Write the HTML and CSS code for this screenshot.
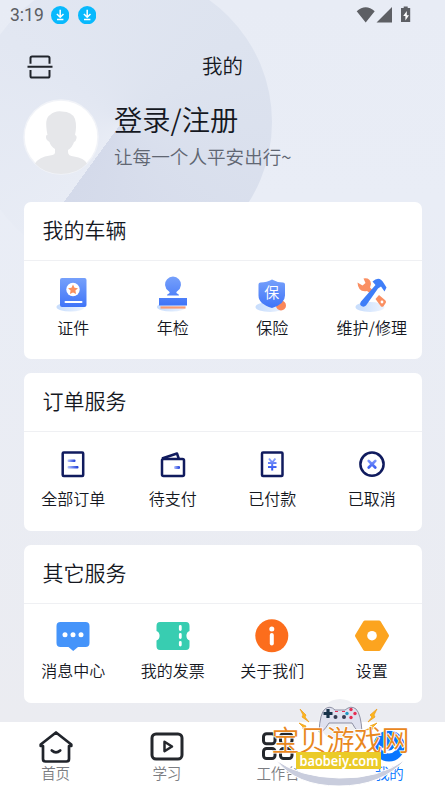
FILE: index.html
```html
<!DOCTYPE html>
<html lang="zh-CN">
<head>
<meta charset="utf-8">
<title>我的</title>
<link rel="stylesheet" href="styles.css">
</head>
<body>
<svg class="defs" width="0" height="0" aria-hidden="true">
  <defs>
    <linearGradient id="blue" x1="0" y1="0" x2="0" y2="1"><stop offset="0" stop-color="#76a0fb"/><stop offset="1" stop-color="#3f74f8"/></linearGradient>
    <linearGradient id="fade" x1="0" y1="0" x2="1" y2="0"><stop offset="0" stop-color="#b8c6ff"/><stop offset="1" stop-color="#1838d8"/></linearGradient>
    <linearGradient id="fadeDown" gradientUnits="userSpaceOnUse" x1="0" y1="11" x2="0" y2="24"><stop offset="0" stop-color="#93a9ff"/><stop offset="1" stop-color="#2148ed"/></linearGradient>
    <linearGradient id="pale" x1="0" y1="0" x2="1" y2="0"><stop offset="0" stop-color="#c6dcfc"/><stop offset="1" stop-color="#edf4ff"/></linearGradient>
    <g id="download"><circle cx="9.2" cy="9.2" r="9.2" fill="#08b9fd"/><path d="M9.2 3.8v7M5.9 8l3.3 3.3L12.5 8M6 13.6h6.4" fill="none" stroke="#fff" stroke-width="1.5"/></g>
  </defs>
</svg>
<div class="app">
  <header class="hero">
    <div class="status">
      <span class="clock">3:19</span>
      <svg class="dl" viewBox="0 0 18.4 18.4"><use href="#download"/></svg>
      <svg class="dl" viewBox="0 0 18.4 18.4"><use href="#download"/></svg>
      <svg class="signals" width="56" height="18" viewBox="0 0 56 18" fill="#5d5f64">
        <path d="M.7 5.2Q9.7-2.6 18.7 5.2L9.7 16.5zM36 1v15.5H20.5zM47.700.5h4v1.500h2.500v14H45v-14h2.700z"/>
        <path d="M50.800 5l-3.600 5h2.200v4.500l3.600-5.300h-2.200z" fill="#fff"/>
      </svg>
    </div>
    <div class="titlebar">
      <svg class="scan" width="26" height="24" viewBox="0 0 26 24" fill="none" stroke="#20242b" stroke-width="2">
        <path d="M3.500 8.700V3q0-1.600 1.600-1.600h15.800q1.600 0 1.600 1.600v5.700M3.500 15v6q0 1.600 1.600 1.600h15.800q1.600 0 1.600-1.600v-6M.500 11.800h25"/>
      </svg>
      <h1>我的</h1>
    </div>
    <div class="profile">
      <svg class="avatar" width="76" height="76" viewBox="0 0 76 76">
        <circle cx="38" cy="38" r="37" fill="#fff" stroke="#f1f3f8" stroke-width="1.5"/>
        <path d="M12 64.500Q16 58 27 56.500Q33 56 32 52V50Q27.500 47 26.500 43Q22.500 41 23 36.500L24.500 36Q21 19 27 16Q32 11.500 39 12.500Q49 12.500 52 20Q54 27 52 36Q55 37 52.500 42Q51.500 43 51 43Q49.500 48 45 51V53Q45 57 51 57.500Q61 59 64 64.500Q54 75 38 75Q22 75 12 64.500" fill="#e6e7ea"/>
      </svg>
      <div class="who"><div class="login">登录/注册</div><div class="motto">让每一个人平安出行~</div></div>
    </div>
  </header>

  <main>
    <section class="card">
      <h2>我的车辆</h2>
      <div class="grid">
        <div class="item"><svg viewBox="0 0 40 40">
          <ellipse cx="17.500" cy="33" rx="14" ry="4.500" fill="url(#pale)"/><rect x="7" y="4" width="26.500" height="29" rx="2" fill="url(#blue)"/><circle cx="20" cy="15.500" r="6.700" fill="#fff"/><path d="M20 10.500l1.500 3.300 3.500.4-2.600 2.400.7 3.500-3.100-1.700-3.100 1.700.7-3.500-2.600-2.400 3.500-.4z" fill="#fa905e"/><path d="M12.500 28h16" stroke="#fff" stroke-width="2" stroke-linecap="round"/></svg><span>证件</span></div>
        <div class="item"><svg viewBox="0 0 40 40">
          <ellipse cx="18.500" cy="33" rx="14.500" ry="4.500" fill="url(#pale)"/><path d="M14 21.500q0-1.500 2-2Q17.500 18.500 15.500 17A7.900 7.900 0 1 1 24.500 17q-2 1.500-.5 2.500q2 .5 2 2zM6 24h28v7.500H6z" fill="url(#blue)"/><path d="M7.500 33.500h25" stroke="#f89a73" stroke-width="2.200"/></svg><span>年检</span></div>
        <div class="item"><svg viewBox="0 0 40 40">
          <ellipse cx="18" cy="33" rx="14.500" ry="5" fill="url(#pale)"/><circle cx="29" cy="31.500" r="5" fill="#fa875a"/><path d="M20 5.500Q25 8.500 31 8.500q2 0 2 2v11Q33 30 20 34Q6.500 30 6.500 21.500v-11q0-2 2-2Q15 8.500 20 5.500" fill="url(#blue)"/><text x="19.800" y="24.300" class="shield">保</text></svg><span>保险</span></div>
        <div class="item"><svg viewBox="0 0 40 40">
          <ellipse cx="18" cy="33" rx="14.500" ry="5" fill="url(#pale)"/><path d="M5.500 8.500l5 3 3-2.500-2-4.500q7-1 7.500 5.500l-1 3.500 3.500 3.500-2.500 3-4-3q-9 1.500-9.500-8.500M23.500 25l3.500-4 6.500 5.500q1.200 1.500 0 2.700l-2 3q-1 1.100-2.500.3z" fill="#fa8f62"/><path d="M20.500 7.500q7-6.500 11.500 2l2.500 4-2 4-3.500-5-3 2L14 31.500q-2 2-4.500.5t-.5-4.500L23.500 11z" fill="#3f7ef8"/><circle cx="30" cy="28" r="1.400" fill="#fff"/></svg><span>维护/修理</span></div>
      </div>
    </section>

    <section class="card">
      <h2>订单服务</h2>
      <div class="grid outline">
        <div class="item"><svg viewBox="0 0 40 40" fill="none" stroke="#101b5e" stroke-width="2.500"><rect x="9.700" y="5.500" width="20.500" height="23.500" rx="1"/><rect x="14.500" y="12.500" width="8" height="2.500" rx="1" fill="url(#fade)" stroke="none"/><rect x="14.500" y="19" width="11" height="2.500" rx="1" fill="url(#fade)" stroke="none"/></svg><span>全部订单</span></div>
        <div class="item"><svg viewBox="0 0 40 40" fill="none" stroke="#101b5e" stroke-width="2.500" stroke-linejoin="round"><rect x="9" y="12" width="22" height="17" rx="1.500"/><path d="M9 11.500L24 6.500l1.700 5"/><rect x="21" y="19" width="6" height="3" rx="1.200" fill="url(#fade)" stroke="none"/></svg><span>待支付</span></div>
        <div class="item"><svg viewBox="0 0 40 40" fill="none" stroke="#101b5e" stroke-width="2.500"><rect x="10" y="5.500" width="20.500" height="23.500" rx="1"/><path d="M17 11.500l3.200 4 3.200-4M20.200 15.500v8M16 16h8.500M16 20h8.500" stroke="url(#fadeDown)" stroke-width="2"/></svg><span>已付款</span></div>
        <div class="item"><svg viewBox="0 0 40 40" fill="none" stroke="#101b5e" stroke-width="2.500"><circle cx="20" cy="17.200" r="11.600"/><path d="M16.700 13.900l6.600 6.600M23.300 13.900l-6.600 6.600" stroke="url(#fadeDown)" stroke-width="2.700" stroke-linecap="round"/></svg><span>已取消</span></div>
      </div>
    </section>

    <section class="card">
      <h2>其它服务</h2>
      <div class="grid">
        <div class="item"><svg viewBox="0 0 40 40"><path d="M7.500 5h25q4 0 4 4v17q0 4-4 4H25l-4.800 4-4.700-4h-8q-4 0-4-4V9q0-4 4-4" fill="#4594fa"/><g fill="#fff"><circle cx="12" cy="17.700" r="2.500"/><circle cx="20" cy="17.700" r="2.500"/><circle cx="28" cy="17.700" r="2.500"/></g></svg><span>消息中心</span></div>
        <div class="item"><svg viewBox="0 0 40 40"><path d="M7 5h26q3.500 0 3.500 4v5a5.200 5.200 0 0 0 0 9.500V29q0 4-3.500 4H7q-3.500 0-3.500-4v-5.500a5.200 5.200 0 0 0 0-9.500V9Q3.500 5 7 5" fill="#38cdb1"/><path d="M27.300 9.500v3M27.300 17.500v3M27.300 25.500v2.500" stroke="#fff" stroke-width="2.800" stroke-linecap="round"/></svg><span>我的发票</span></div>
        <div class="item"><svg viewBox="0 0 40 40"><circle cx="19.800" cy="18.800" r="16.500" fill="#fc6d1c"/><circle cx="19.800" cy="12" r="2.500" fill="#fff"/><path d="M19.800 18v8.500" stroke="#fff" stroke-width="4" stroke-linecap="round"/></svg><span>关于我们</span></div>
        <div class="item"><svg viewBox="0 0 40 40"><path d="M13 5.500h14L35 18.700 27 32H13L5 18.700z" fill="#fca41f" stroke="#fca41f" stroke-width="4" stroke-linejoin="round"/><circle cx="20" cy="18.700" r="4.800" fill="#fff"/></svg><span>设置</span></div>
      </div>
    </section>
  </main>

  <nav>
    <div class="tab"><svg viewBox="0 0 40 36" fill="none" stroke="#20242b" stroke-width="2.700" stroke-linejoin="round" stroke-linecap="round"><path d="M7 17H4.700V15.500L20 3.500 35.300 15.500V17H33M7 17v13q0 2.500 2.500 2.500h21q2.500 0 2.500-2.500V17M15.800 21.500q4.200 3.600 8.400 0"/></svg><span>首页</span></div>
    <div class="tab"><svg viewBox="0 0 40 36" fill="none" stroke="#24272c" stroke-width="3" stroke-linejoin="round"><rect x="5" y="5" width="30" height="25" rx="4"/><path d="M17.500 12.800l7.500 4.700-7.500 4.700z" stroke-width="2.500"/></svg><span>学习</span></div>
    <div class="tab"><svg viewBox="0 0 40 36" fill="none" stroke="#24272c" stroke-width="3"><rect x="5.500" y="4.700" width="11.500" height="10" rx="3"/><rect x="22.500" y="4.700" width="11.500" height="10" rx="3"/><rect x="5.500" y="19.500" width="11.500" height="10" rx="3"/><rect x="22.500" y="19.500" width="11.500" height="10" rx="3"/></svg><span>工作台</span></div>
    <div class="tab on"><svg viewBox="0 0 40 36"><circle cx="20" cy="17" r="15.500" fill="#0876ff"/><path d="M14 20q6 6 12 0" fill="none" stroke="#fff" stroke-width="3" stroke-linecap="round"/></svg><span>我的</span></div>
  </nav>

  <svg class="badge" width="150" height="96" viewBox="0 0 150 96">
    <circle cx="74" cy="25" r="21" fill="#eeeff3"/>
    <path d="M10 65Q33 82 73 83T140 64Q116 91 73 91T10 65" fill="#c9cddd" stroke="#fff" stroke-width="1"/>
    <path d="M53 37Q54 18 59 14Q64 10 69 15H79Q85 10 90 14Q95 19 96 37Q92 39 86 28H63Q56 39 53 37" fill="#dfe1ef" stroke="#777a91" stroke-width=".8"/>
    <path d="M62 14v9M57.500 18.500h9" stroke="#18334a" stroke-width="3.200"/>
    <g fill="#e52f53"><circle cx="85" cy="14.500" r="1.700"/><circle cx="85" cy="22.500" r="1.700"/><circle cx="89" cy="18.500" r="1.700"/><circle cx="81" cy="18.500" r="1.700" fill="#2098c4"/><path d="M69 16h3v1h-3zM76 16h3v1h-3z"/></g>
    <circle cx="69.500" cy="22" r="2" fill="#363c52"/><circle cx="78" cy="22" r="2" fill="#363c52"/>
    <path d="M34 14l6 6-1 2 4 5-7-5 1-2zM111 14l-7 6 2 2-4 5 7-5-1-2zM33 28l7 3-1 2 6 2-8-1v-2zM111 28l-7 3 1 2-6 2 8-1v-2z" fill="#ffb71c" stroke="#e99919" stroke-width=".7"/>
    <text x="5.500" y="56" class="brand" textLength="138">宝贝游戏网</text>
    <rect x="30" y="57" width="85" height="17" fill="#ebcb28"/>
    <text x="73" y="70.500" class="domain" textLength="79" lengthAdjust="spacingAndGlyphs">baobeiy.com</text>
  </svg>
</div>
</body>
</html>
```
FILE: styles.css
```css
* { box-sizing: border-box; }
body { margin: 0; font-family: "Noto Sans CJK SC DemiLight", "Noto Sans CJK SC", "Noto Sans", sans-serif; font-weight: 350; color: #15181f; }
.defs { display: block; }
.app {
  position: relative;
  width: 445px;
  height: 791px;
  overflow: hidden;
  display: flex;
  flex-direction: column;
  background:
    linear-gradient(180deg, #e8ecf5 0, #e9edf6 200px, #ebecf1 720px);
}
.app::before {
  content: "";
  position: absolute;
  left: -28px;
  top: -28px;
  width: 300px;
  height: 300px;
  border-radius: 50%;
  background: conic-gradient(from 216deg, #e8ecf5 0deg, #e2e7f2 90deg, #dde3ef 200deg, #d4daea 360deg);
}
.hero { position: relative; height: 201.500px; display: flex; flex-direction: column; }
.status { display: flex; align-items: center; height: 30px; padding-left: 10px; }
.clock { width: 41px; font: 400 17.500px/30px Roboto, sans-serif; color: #5b5d62; }
.dl { width: 18.4px; height: 18.4px; margin-right: 8.6px; }
.signals { margin-left: 251px; margin-top: -1px; }
.titlebar { height: 68.500px; padding: 0 27px; display: grid; grid-template-columns: 26px 1fr 26px; align-items: center; }
.scan { margin-top: 5px; }
h1 { margin: 1px 0 0; text-align: center; font-size: 20.5px; font-weight: inherit; line-height: 30px; }
.profile { display: flex; padding: 0 23px; gap: 15px; }
.login { font-size: 28.3px; line-height: 42px; margin-top: -1px; white-space: nowrap; }
.motto { font-size: 18.600px; line-height: 27px; margin-top: 2px; color: #606672; white-space: nowrap; }
main { position: relative; display: flex; flex-direction: column; gap: 14px; padding: 0 23.5px; }
.card { height: 157.800px; background: #fff; border-radius: 7px; }
h2 { margin: 0; height: 59px; padding: 0 19px; border-bottom: 1px solid #eff0f3; font-size: 21px; font-weight: inherit; line-height: 54px; }
.grid { display: grid; grid-template-columns: repeat(4, 1fr); }
.item { display: flex; flex-direction: column; align-items: center; padding-top: 13px; font-size: 16px; line-height: 24px; white-space: nowrap; }
.item svg { width: 40px; height: 40px; margin-bottom: 1px; }
.outline .item { padding-top: 14.500px; }
.outline svg { margin-bottom: -.5px; }
.shield { font-size: 15px; font-weight: 500; fill: #fff; text-anchor: middle; }
nav { position: absolute; left: 0; right: 0; bottom: 0; height: 69px; background: #fff; display: grid; grid-template-columns: repeat(4, 1fr); }
.tab { display: flex; flex-direction: column; align-items: center; padding-top: 7px; color: #7b7d82; font-size: 14.500px; line-height: 20px; }
.tab svg { width: 40px; height: 36px; margin-bottom: -2px; }
.on { color: #0876ff; }
.badge { position: absolute; left: 266px; top: 695px; }
.brand { font-size: 28px; font-weight: 400; fill: #e9871d; stroke: #fff; stroke-width: 1.5px; paint-order: stroke; }
.domain { font: 600 14.500px "Noto Sans", sans-serif; fill: #fff; text-anchor: middle; }
```
